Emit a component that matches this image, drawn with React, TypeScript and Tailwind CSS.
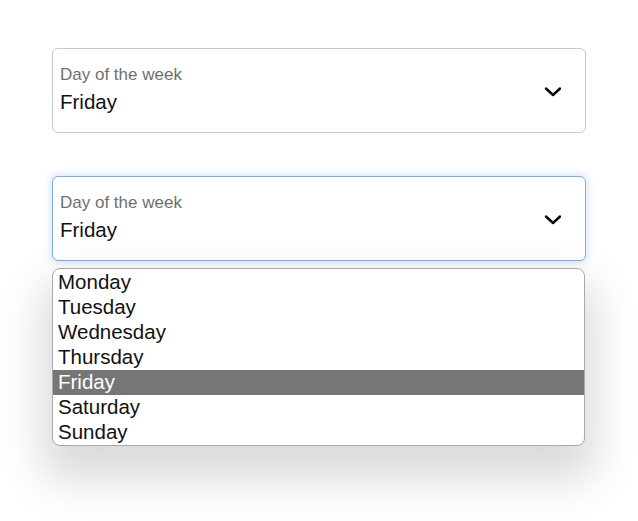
const days = ['Monday', 'Tuesday', 'Wednesday', 'Thursday', 'Friday', 'Saturday', 'Sunday'];

function Chevron() {
  return (
    <svg width="18" height="12" viewBox="0 0 18 12" className="shrink-0">
      <path d="M2 2.5 L9 9 L16 2.5" fill="none" stroke="#000" strokeWidth="2.4" strokeLinecap="round" strokeLinejoin="round" />
    </svg>
  );
}

function SelectBox({ focused }: { focused?: boolean }) {
  return (
    <div
      className={
        'flex h-[85px] items-start justify-between rounded-[6px] border bg-white pl-[7px] pr-[23px] pt-[15px] ' +
        (focused
          ? 'border-[#7eaee6] shadow-[0_0_7px_2px_rgba(120,165,230,0.28)]'
          : 'border-[#c9c9c9]')
      }
    >
      <div className="flex flex-col">
        <span className="text-[17px] leading-[22px] text-[#6f6f6f]">Day of the week</span>
        <span className="mt-[3px] text-[20.5px] leading-[26px] text-[#111]">Friday</span>
      </div>
      <div className="mt-[22px]">
        <Chevron />
      </div>
    </div>
  );
}

export default function App() {
  return (
    <div
      className="min-h-[521px] bg-white px-[52px] pt-[48px]"
      style={{ fontFamily: '"Liberation Sans", Arial, sans-serif' }}
    >
      <SelectBox />
      <div className="mt-[43px]">
        <SelectBox focused />
      </div>
      <div className="mr-px mt-[7px] overflow-hidden rounded-[8px] border border-[#a9a9a9] bg-white pt-px shadow-[0_24px_44px_10px_rgba(0,0,0,0.15)]">
        {days.map((d) => (
          <div
            key={d}
            className={
              'h-[25px] px-[5px] text-[20.5px] leading-[24px] ' +
              (d === 'Friday' ? 'bg-[#767676] text-white' : 'text-[#111]')
            }
          >
            {d}
          </div>
        ))}
      </div>
    </div>
  );
}
